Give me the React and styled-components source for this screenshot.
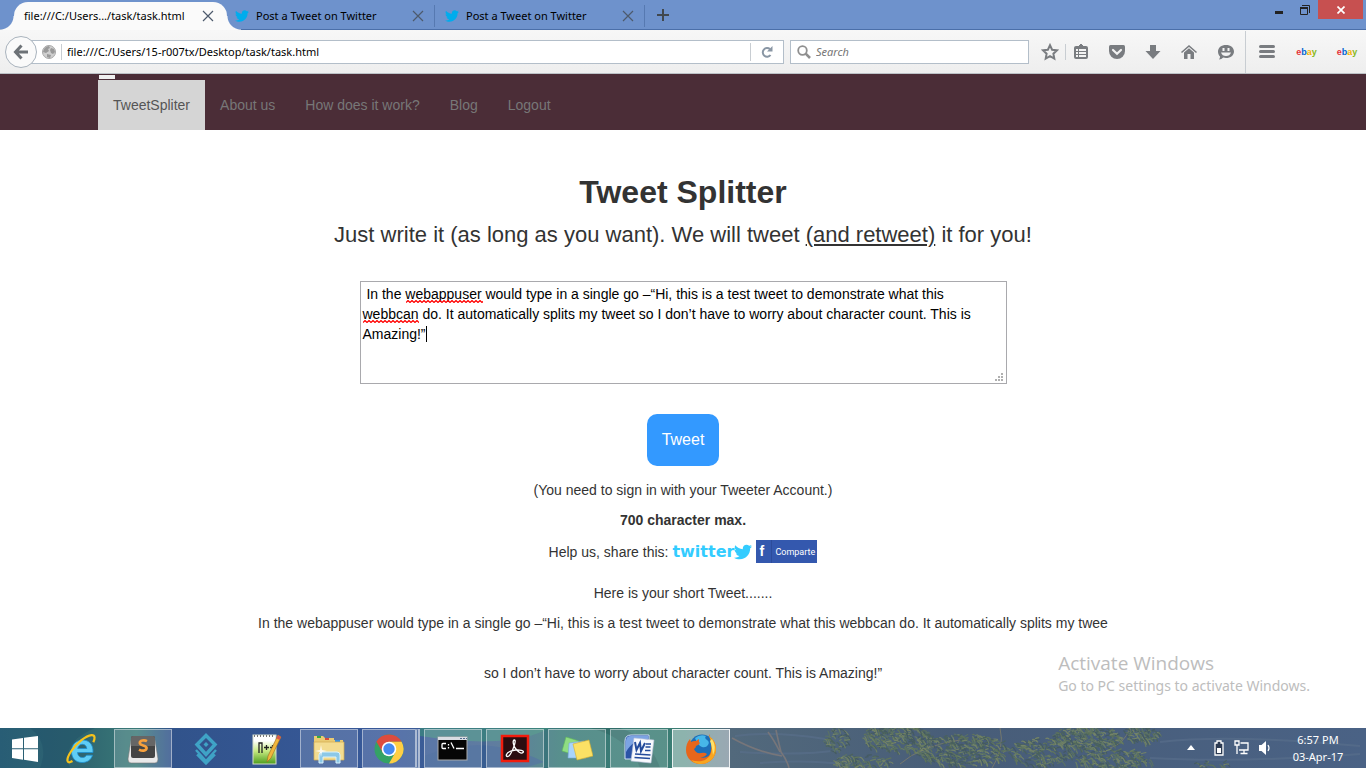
import React from "react";
import styled, { createGlobalStyle, css } from "styled-components";
import { FaTwitter } from "react-icons/fa";

const ui = '"Noto Sans", "Open Sans", sans-serif';
const page = '"Liberation Sans", Arial, sans-serif';

const Global = createGlobalStyle`
  *, *::before, *::after { box-sizing: border-box; }
  body { margin: 0; background: #fff; font-family: ${page}; }
  button, input, textarea { font: inherit; color: inherit; margin: 0; }
  button { padding: 0; border: 0; background: none; }
  svg { display: block; }
`;

const Screen = styled.div`
  min-height: 100vh;
  display: flex;
  flex-direction: column;
`;

/* ---------- browser chrome ---------- */

const TabStrip = styled.div`
  display: flex;
  height: 30px;
  padding-left: 14px;
  padding-right: 3px;
  background: #6e92cc;
  border-bottom: 1px solid #4b6fa9;
  font: 11px/16px ${ui};
  color: #000;
`;

const Tab = styled.div`
  position: relative;
  display: flex;
  align-items: center;
  width: 210px;
  padding: 2px 11px 0 8px;
  ${(p) =>
    p.$active
      ? css`
          width: 213px;
          height: 28px;
          margin-top: 2px;
          padding: 0 11px 0 10px;
          background: #fafafa;
          border-radius: 14px 14px 0 0;
          &::before,
          &::after {
            content: "";
            position: absolute;
            bottom: 0;
            width: 14px;
            height: 14px;
          }
          &::before {
            left: -14px;
            background: radial-gradient(circle at 0 0, transparent 13px, #fafafa 14px);
          }
          &::after {
            right: -14px;
            background: radial-gradient(circle at 100% 0, transparent 13px, #fafafa 14px);
          }
        `
      : css`
          &::after {
            content: "";
            position: absolute;
            right: 2px;
            top: 5px;
            height: 22px;
            border-right: 1px solid #5679b1;
          }
        `}
`;

const TabTitle = styled.span`
  flex: 1;
  white-space: nowrap;
`;

const TabIcon = styled.span`
  width: 21px;
  color: #00aced;
`;

const IconButton = styled.button`
  display: flex;
  align-items: center;
  justify-content: center;
  width: ${(p) => p.$w || 36}px;
  height: ${(p) => p.$h || 28}px;
  flex: none;
  background: ${(p) => p.$bg || "none"};
`;

const WindowControls = styled.div`
  display: flex;
  align-items: flex-start;
  margin-left: auto;
`;

const Toolbar = styled.div`
  display: flex;
  align-items: center;
  height: 44px;
  padding-left: 5px;
  background: linear-gradient(#f7f7f7, #eeeeee);
  border-bottom: 1px solid #bcc1c6;
  font: 11px/16px ${ui};
`;

const BackButton = styled.button`
  position: relative;
  z-index: 1;
  display: flex;
  align-items: center;
  justify-content: center;
  width: 32px;
  height: 32px;
  border: 1px solid #a9b3bd;
  border-radius: 50%;
  background: #fafafa;
`;

const Field = styled.label`
  display: flex;
  align-items: center;
  height: 24px;
  background: #fff;
  border: 1px solid #b3bec9;
`;

const UrlField = styled(Field)`
  flex: 1;
  margin-left: -6px;
  padding-left: 10px;
`;

const SearchField = styled(Field)`
  flex: 0 1 239px;
  margin-left: 6px;
  padding-left: 6px;
  gap: 5px;
`;

const FieldInput = styled.input`
  flex: 1;
  min-width: 0;
  height: 20px;
  padding: 0;
  border: 0;
  outline: 0;
  background: none;
  &::placeholder {
    color: #757575;
    font-style: italic;
    opacity: 1;
  }
`;

const Rule = styled.span`
  width: 1px;
  height: ${(p) => p.$h || 16}px;
  margin: 0 ${(p) => p.$gap || 0}px;
  flex: none;
  background: #c8cdd2;
`;

const Tools = styled.div`
  display: flex;
  align-items: center;
  padding-left: 6px;
`;

const EbayMark = styled.span`
  font: bold 9px/12px ${page};
  & > :nth-child(1) { color: #e53238; }
  & > :nth-child(2) { color: #0064d2; }
  & > :nth-child(3) { color: #f5af02; }
  & > :nth-child(4) { color: #86b817; }
`;

/* ---------- web page ---------- */

const NavBar = styled.header`
  background: #4b2d37;
`;

const NavInner = styled.div`
  max-width: 1170px;
  margin: 0 auto;
`;

const NavToggle = styled.button`
  display: block;
  width: 16px;
  height: 4px;
  margin-left: 1px;
  background: #efefef;
`;

const NavTop = styled.div`
  padding: 1px 0;
`;

const NavLinks = styled.nav`
  display: flex;
`;

const NavLink = styled.a`
  padding: 15px;
  font-size: 14px;
  line-height: 20px;
  text-decoration: none;
  color: ${(p) => (p.$active ? "#555" : "#777")};
  background: ${(p) => (p.$active ? "#d5d5d5" : "none")};
`;

const Main = styled.main`
  position: relative;
  flex: 1;
  display: flex;
  flex-direction: column;
  align-items: center;
  padding: 44px 16px 16px;
  color: #333;
  font-size: 14px;
  line-height: 20px;
  text-align: center;
`;

const Title = styled.h1`
  margin: 0 0 13px;
  font-size: 32px;
  line-height: 36px;
`;

const Subtitle = styled.p`
  margin: 0 0 34px;
  font-size: 22px;
  line-height: 24px;
`;

const Composer = styled.div`
  position: relative;
  width: 100%;
  max-width: 647px;
  height: 103px;
  margin-bottom: 30px;
`;

const TweetBox = styled.textarea`
  display: block;
  width: 100%;
  height: 100%;
  padding: 2px;
  border: 1px solid #a9a9ad;
  outline: 0;
  resize: none;
  color: #000;
  background: #fff;
`;

const Squiggle = styled.span`
  position: absolute;
  left: ${(p) => p.$x}px;
  top: ${(p) => p.$y}px;
  width: ${(p) => p.$w}px;
  height: 3px;
  overflow: hidden;
`;

const Caret = styled.span`
  position: absolute;
  left: 66px;
  top: 45px;
  width: 1px;
  height: 16px;
  background: #000;
`;

const Grip = styled.span`
  position: absolute;
  right: 4px;
  bottom: 3px;
`;

const TweetButton = styled.button`
  padding: 15px;
  margin-bottom: 14px;
  border-radius: 10px;
  background: #3399ff;
  color: #fff;
  font-size: 16px;
  line-height: 22px;
`;

const Line = styled.p`
  margin: 0 0 ${(p) => p.$after || 10}px;
  font-weight: ${(p) => (p.$bold ? "bold" : "normal")};
`;

const ShareRow = styled.div`
  display: flex;
  align-items: center;
  gap: 4px;
  margin-bottom: 20px;
`;

const TwitterLink = styled.a`
  display: flex;
  align-items: center;
  color: #33ccff;
  font: bold 16px/22px "DejaVu Sans", sans-serif;
  text-decoration: none;
`;

const FacebookLink = styled.a`
  display: flex;
  align-items: center;
  width: 61px;
  height: 23px;
  background: #3458ae;
  color: #fff;
  font: 9px/14px Roboto, sans-serif;
  text-decoration: none;
`;

const FacebookF = styled.span`
  flex: none;
  width: 16px;
  margin-right: 3px;
  padding-left: 3px;
  border-right: 1px solid #2c4c9b;
  font: bold 14px/23px ${page};
  text-align: left;
`;

const Watermark = styled.aside`
  position: absolute;
  right: 56px;
  bottom: 32px;
  color: #bdbdbd;
  font: 14px/20px ${ui};
  text-align: left;
`;

const WatermarkTitle = styled.div`
  font: 19px/26px "Open Sans", "Noto Sans", sans-serif;
`;

/* ---------- taskbar ---------- */

const Taskbar = styled.footer`
  position: relative;
  display: flex;
  height: 40px;
  overflow: hidden;
  background: #4b607d;
  color: #fff;
`;

const Wallpaper = styled.svg`
  position: absolute;
  inset: 0;
  width: 100%;
  height: 100%;
`;

const Apps = styled.div`
  position: relative;
  display: flex;
  gap: 4px;
  padding-top: 1px;
`;

const AppButton = styled.button`
  display: flex;
  align-items: center;
  justify-content: center;
  width: 58px;
  height: 39px;
  border: 1px solid ${(p) => (p.$open ? "rgba(255,255,255,.45)" : "transparent")};
  background: ${(p) => (p.$open ? "rgba(255,255,255,.16)" : "none")};
  ${(p) =>
    p.$current &&
    css`
      border-color: rgba(255, 255, 255, 0.8);
      background: rgba(255, 255, 255, 0.42);
    `}
  ${(p) =>
    p.$stacked &&
    css`
      border-right: 5px double rgba(255, 255, 255, 0.5);
    `}
  ${(p) => p.$start && css`width: 48px;`}
`;

const Tray = styled.div`
  position: relative;
  display: flex;
  align-items: center;
  margin-left: auto;
  padding-right: 6px;
`;

const TrayIcons = styled.div`
  display: flex;
  margin-left: 4px;
`;

const Clock = styled.time`
  width: 84px;
  text-align: center;
  font: 11px/17px ${ui};
`;

/* ---------- drawings ---------- */

const Close = ({ c = "#4d5a6c" }) => (
  <svg width="12" height="12" viewBox="0 0 12 12" stroke={c} strokeWidth="1.2">
    <path d="M1 1l10 10M11 1L1 11" />
  </svg>
);

const tool = {
  star: <path d="M9 2.200l2.100 4.500 4.900.6-3.600 3.400.9 4.900L9 13.200l-4.300 2.400.9-4.900L2 7.300l4.900-.6z" fill="none" stroke="#797c80" strokeWidth="2" />,
  list: (
    <g>
      <path d="M6 4l3-3 3 3" fill="#797c80" stroke="#797c80" />
      <rect x="2" y="3" width="14" height="13" rx="2" fill="#797c80" />
      <path d="M4 6h2v2H4zM7 6h7v2H7zM4 9h2v2H4zM7 9h7v2H7zM4 12h2v2H4zM7 12h7v2H7z" fill="#f3f3f3" />
    </g>
  ),
  pocket: (
    <g>
      <path d="M1 3.500Q1 2 2.500 2h13Q17 2 17 3.500V8a8 8 0 0 1-16 0z" fill="#797c80" />
      <path d="M5 7l4 3.800L13 7" fill="none" stroke="#f3f3f3" strokeWidth="2.200" strokeLinecap="round" />
    </g>
  ),
  down: <path d="M6 2h6v6h4.500L9 16 1.500 8H6z" fill="#797c80" />,
  home: (
    <g>
      <path d="M1.500 9.500L9 3l7.500 6.500" fill="none" stroke="#797c80" strokeWidth="1.600" />
      <path d="M4 9.500L9 5.200l5 4.300V16h-3.500v-5h-3v5H4z" fill="#797c80" />
    </g>
  ),
  chat: (
    <g>
      <path d="M9 2c4.700 0 8 2.700 8 6.500S13.700 15 9 15c-1 0-2-.1-2.800-.4Q4.500 16.500 2 16.500q1.200-1.500 1-3C1.700 12.300 1 10.500 1 8.500 1 4.700 4.300 2 9 2z" fill="#797c80" />
      <rect x="5.500" y="5" width="2" height="3" fill="#f3f3f3" />
      <rect x="10.500" y="5" width="2" height="3" fill="#f3f3f3" />
      <path d="M4 9.500h10q-1.200 3.500-5 3.500T4 9.500z" fill="#f3f3f3" />
    </g>
  ),
  menu: <path d="M2.500 3.500h13M2.500 8.500h13M2.500 13.500h13" stroke="#797c80" strokeWidth="3" strokeLinecap="round" />,
};

const ToolIcon = ({ name }) => (
  <svg width="18" height="18" viewBox="0 0 18 18">{tool[name]}</svg>
);

const Ebay = () => (
  <EbayMark><span>e</span><span>b</span><span>a</span><span>y</span></EbayMark>
);

const wave = (w) => {
  let d = "M0 2.500";
  for (let x = 2; x <= w + 2; x += 2) d += `L${x} ${(x / 2) % 2 ? 0.5 : 2.5}`;
  return d;
};

const Misspelling = ({ x, y, w }) => (
  <Squiggle $x={x} $y={y} $w={w}>
    <svg width={w} height="3"><path d={wave(w)} fill="none" stroke="#f00" strokeWidth="1.200" /></svg>
  </Squiggle>
);

const AppIcon = ({ children }) => (
  <svg width="32" height="32" viewBox="0 0 32 32">{children}</svg>
);

const apps = [
  {
    name: "Start",
    start: true,
    art: (
      <path d="M4 6.500l11-1.500V15.200H4zM16 4.800L30 3v12.200H16zM4 16.200h11v10.500L4 25zM16 16.200h14V29l-14-2.200z" fill="#fff" />
    ),
  },
  {
    name: "Internet Explorer",
    art: (
      <g fill="none">
        <path fillRule="evenodd" d="M28 19.500H12.500c.3 3.300 2.300 5 4.800 5 2 0 3.300-.8 4.200-2.300h6c-1.500 4.800-5.300 7.300-10.400 7.300C10.500 29.500 6.500 25 6.500 18.500S11 7 17.500 7 28.500 11.500 28 19.500zM12.700 15.500h9.100c-.3-2.600-1.900-4.200-4.400-4.200s-4.200 1.600-4.700 4.200z" fill="#5fcdf5" stroke="#1d8fd0" strokeWidth=".8" />
        <path d="M7.500 28C1 32 1 26 6 18.500 12 9.500 21 2.800 26.500 2.200c4-.2 3.500 3.600 1.800 7" stroke="#f6c21c" strokeWidth="2.200" />
      </g>
    ),
  },
  {
    name: "Sublime Text",
    open: true,
    art: (
      <g>
        <path d="M4 7q0-2 2-2h20q2 0 2 2l3 19q0 4-3 4H4q-3 0-3-4z" fill="#e9e9e9" stroke="#777" strokeWidth=".6" />
        <rect x="4" y="3" width="24" height="22" rx="2" fill="#444" />
        <path d="M4 5q0-2 2-2h20q2 0 2 2v8H4z" fill="#666" />
        <path d="M20 8.200c-2.500-1.400-7.500-1-7.200 2s7.200 1.500 6.800 5c-.4 3-4.600 3-7.600 1.400" fill="none" stroke="#f9a13c" strokeWidth="2.600" />
      </g>
    ),
  },
  {
    name: "Cube",
    art: (
      <g fill="none" stroke="#3fa3c6" strokeWidth="3.500">
        <path d="M17 2.500l9 9-9 10-9-10z" />
        <path d="M7 17l10 11 10-11M8 21.500l9 9 9-9" strokeWidth="2.400" />
        <path d="M17 9l2.500 2.500L17 14l-2.500-2.500z" fill="#3fa3c6" stroke="none" />
      </g>
    ),
  },
  {
    name: "Notepad++",
    art: (
      <g>
        <defs>
          <linearGradient id="npp" x2="0" y2="1">
            <stop offset=".2" stopColor="#fff" />
            <stop offset=".55" stopColor="#c7ea81" />
            <stop offset="1" stopColor="#4c9c1c" />
          </linearGradient>
        </defs>
        <rect x="2" y="2" width="23" height="29" fill="url(#npp)" stroke="#d5dccb" />
        <path d="M3 3h21" stroke="#777" strokeWidth="2" strokeDasharray="1 2" />
        <path d="M8 20V10h3v10M13 14.500h5M15.500 12v5M19 14.500h5M21.500 12v5" fill="none" stroke="#222" strokeWidth="1.300" />
        <path d="M27 2l3 2-10 21-4 4 1-6z" fill="#f0b73c" stroke="#9b6a21" strokeWidth=".6" />
        <path d="M27 2l3 2-1.500 3-3.200-1.800z" fill="#d85a4c" />
      </g>
    ),
  },
  {
    name: "File Explorer",
    open: true,
    art: (
      <g>
        <path d="M1 3h9l2 2h9v5H1zM9 5h10l1 2h10v6H9z" fill="#eacb73" />
        <path d="M4 3h4v2H4z" fill="#39a83e" />
        <path d="M12 5h4v2h-4z" fill="#d54b3a" />
        <path d="M22 7h5v2h-5z" fill="#3a90dc" />
        <path d="M1 9h30v18H1z" fill="#f3dc90" stroke="#d1a94e" strokeWidth=".7" />
        <path d="M6 30v-8q0-3 3-3h15q3 0 3 3v8h-4v-6H10v6z" fill="#8cc8e7" stroke="#d9f2fc" strokeWidth="1" />
        <path d="M8 12l1 5 5 1-5 1-1 5-1-5-5-1 5-1z" fill="#fff" opacity=".8" />
      </g>
    ),
  },
  {
    name: "Chrome",
    open: true,
    stacked: true,
    art: (
      <g>
        <circle cx="16" cy="16" r="14.500" fill="#34a265" />
        <path d="M16 16L3.440 8.750A14.500 14.500 0 0 1 28.560 8.750H16z" fill="#dd4b3e" />
        <path d="M28.560 8.750A14.500 14.500 0 0 1 16 30.500L22.300 19.600 16 8.750z" fill="#ffce44" />
        <path d="M3.440 8.750L9.700 19.600 16 16V8.750z" fill="#dd4b3e" />
        <circle cx="16" cy="16" r="7.300" fill="#fff" />
        <circle cx="16" cy="16" r="5.700" fill="#4589f0" />
      </g>
    ),
  },
  {
    name: "Command Prompt",
    open: true,
    art: (
      <g>
        <rect x="1" y="4" width="29" height="23" fill="#050505" stroke="#aaa" />
        <rect x="1" y="4" width="29" height="3" fill="#d8dce2" />
        <path d="M23 5.500h2m1 0h2m1 0h1" stroke="#526b90" />
        <path d="M9 10.500H6q-1 0-1 1v3q0 1 1 1h3M11.500 11v1.500M11.500 14v1.500M14 9.500l3 6M19 15.500h8" fill="none" stroke="#fff" strokeWidth="1.300" />
      </g>
    ),
  },
  {
    name: "Adobe Reader",
    open: true,
    art: (
      <g>
        <rect x="3" y="3" width="26" height="25" fill="#2b0d10" stroke="#f21c0d" strokeWidth="2.500" />
        <path d="M15.500 7c-2.500 0-1 6 1 8.500s5.500 6 7.500 4-4-3-7.500-2.500-8 2-9 4.500 2 3 4-.5c3-5 6-14 4-14z" fill="none" stroke="#fff" strokeWidth="1.300" />
      </g>
    ),
  },
  {
    name: "Sticky Notes",
    open: true,
    art: (
      <g strokeWidth=".6">
        <path d="M5 4l13 4-4 14-13-4z" fill="#8fdc83" stroke="#60b957" />
        <path d="M8 10l15-2 2 17H7z" fill="#a9d4fb" stroke="#75a8d9" />
        <path d="M12 11l16-4 4 16-16 4z" fill="#fbe165" stroke="#d4ad2d" />
      </g>
    ),
  },
  {
    name: "Word",
    open: true,
    art: (
      <g>
        <path d="M2 8q0-6 6-6h18v24H2z" fill="#2b54a6" stroke="#cfdff7" />
        <path d="M3 8q0-5 5-5h17v3Q10 6 3 19z" fill="#7ca4e3" />
        <path d="M11 5l20 2-3 23-20-2z" fill="#f7f9fd" stroke="#b8c3da" strokeWidth=".6" />
        <path d="M12 9l1.500 8L17 10l1 8 4-8" fill="none" stroke="#234b9b" strokeWidth="2" />
        <path d="M23 11h5M22.500 14h5M22 17.500h5.500M12 21l15.500 1M11.500 24.500l15.500 1" stroke="#234b9b" strokeWidth="1.600" />
      </g>
    ),
  },
  {
    name: "Firefox",
    open: true,
    current: true,
    art: (
      <g>
        <circle cx="17" cy="14" r="12.500" fill="#1d6fb8" />
        <path d="M10 5q5-4 11-2-2 2 1 4t1 5-6 2-7-9z" fill="#47b7e8" />
        <path d="M24 3q7 5 7 13c0 8-6 15-15 15C7 31 1 25 1 17c0-4 1-8 4-11l1 3q2-1.500 5-1l3-2q-.5 3 1 4-1 2-4 3 0 2-2 3 2 5 7 4 4-1 6 1-3 4-8 3 10 3 12-6t-2-17z" fill="#e8661b" />
        <path d="M24 3q7 5 7 13c0 8-6 15-15 15-4 0-7-1-10-4 9 3 17 1 20-7q2-8-2-17z" fill="#f8a51f" />
        <path d="M27 6q5 8 1 16-1-9-3-14z" fill="#ffe26a" />
      </g>
    ),
  },
];

/* Repeatable pseudo-random leaf strokes for the desktop seen through the taskbar. */
const leaves = (() => {
  let seed = 7;
  const rnd = () => {
    seed = (seed * 16807) % 2147483647;
    return seed / 2147483647;
  };
  const clumps = [
    [835, 12, 12, 12, 50], [895, 10, 34, 14, 260], [960, 22, 46, 16, 380],
    [860, 35, 30, 8, 90], [1040, 24, 32, 14, 170], [1085, 10, 34, 12, 280],
    [1110, 32, 40, 10, 180], [1140, 6, 18, 8, 90], [1210, 36, 16, 4, 18],
  ];
  const shades = ["#71855f", "#5d7562", "#7f8d63", "#4b6357", "#657a55", "#445a5c"];
  return clumps.flatMap(([cx, cy, rx, ry, n]) =>
    Array.from({ length: n }, () => {
      const angle = rnd() * Math.PI * 2;
      const reach = Math.sqrt(rnd());
      const x = cx + Math.cos(angle) * reach * rx;
      const y = cy + Math.sin(angle) * reach * ry;
      const dx = 2 + rnd() * 4;
      const dy = (rnd() - 0.3) * 9;
      return {
        d: `M${x.toFixed(1)} ${y.toFixed(1)}q${(dx / 2).toFixed(1)} -1 ${dx.toFixed(1)} ${dy.toFixed(1)}`,
        c: shades[Math.floor(rnd() * shades.length)],
      };
    })
  );
})();

const Desktop = () => (
  <Wallpaper viewBox="0 0 1366 40" preserveAspectRatio="none" aria-hidden="true">
    <defs>
      <linearGradient id="sky">
        <stop offset="0" stopColor="#285d75" />
        <stop offset=".06" stopColor="#2f6570" />
        <stop offset=".1" stopColor="#3a7a78" />
        <stop offset=".125" stopColor="#31538b" />
        <stop offset=".29" stopColor="#38599a" />
        <stop offset=".36" stopColor="#42648e" />
        <stop offset=".41" stopColor="#397a78" />
        <stop offset=".5" stopColor="#3b7d73" />
        <stop offset=".535" stopColor="#52697c" />
        <stop offset=".7" stopColor="#485d78" />
        <stop offset="1" stopColor="#4a6285" />
      </linearGradient>
    </defs>
    <rect width="1366" height="40" fill="url(#sky)" />
    <path d="M30 0q20 15 10 40h30Q60 15 95 0z" fill="#1f4d66" opacity=".4" />
    <path d="M420 0h130q-40 22-130 8z" fill="#3c8a7c" opacity=".7" />
    <path d="M424 28q60-24 120 6l-20 6H424z" fill="#345b92" opacity=".7" />
    <path d="M590 0q40 10 50 40h20Q650 10 620 0z" fill="#2c6461" opacity=".6" />
    <path d="M735 8q40-5 90 3M740 24q60 4 100-2M1160 14q70-8 200 4M1150 30q90 5 210-4M760 35q50-4 90 2" fill="none" stroke="#5a6f8c" strokeWidth="2" opacity=".6" />
    <path d="M732 10q25 14 50 18M776 2q2 10 5 22 6 8 8 16M768 4q6 8 12 20" fill="none" stroke="#77767a" strokeWidth="1.600" />
    <path d="M1000 0q5 20-8 40M900 36q20-18 60-24M1110 20q14-4 20-20" fill="none" stroke="#74776d" />
    <g fill="none" strokeWidth="1.200" opacity=".8">
      {leaves.map((l, i) => <path key={i} d={l.d} stroke={l.c} />)}
    </g>
  </Wallpaper>
);

export default function App() {
  return (
    <Screen>
      <Global />
      <TabStrip>
        <Tab $active>
          <TabTitle>file:///C:/Users.../task/task.html</TabTitle>
          <IconButton $w={16} $h={16} aria-label="Close tab"><Close /></IconButton>
        </Tab>
        {[1, 2].map((n) => (
          <Tab key={n}>
            <TabIcon><FaTwitter size={14} /></TabIcon>
            <TabTitle>Post a Tweet on Twitter</TabTitle>
            <IconButton $w={16} $h={16} aria-label="Close tab"><Close /></IconButton>
          </Tab>
        ))}
        <IconButton $w={32} $h={30} aria-label="New tab">
          <svg width="12" height="12"><path d="M6 0v12M0 6h12" stroke="#41484f" strokeWidth="2" /></svg>
        </IconButton>
        <WindowControls>
          <IconButton $w={26} $h={20} aria-label="Minimize">
            <svg width="8" height="8"><path d="M0 6.500h8" stroke="#222" strokeWidth="3" /></svg>
          </IconButton>
          <IconButton $w={26} $h={19} aria-label="Restore">
            <svg width="10" height="10" fill="none" stroke="#222">
              <path d="M0 3h8" strokeWidth="2" />
              <path d="M.5 2.500h7v7h-7zM2 .5h7.500V8" />
            </svg>
          </IconButton>
          <IconButton $w={45} $h={19} $bg="#c75050" aria-label="Close window">
            <svg width="8" height="8"><path d="M.5 .5l7 7M7.500 .5l-7 7" stroke="#fff" strokeWidth="1.700" /></svg>
          </IconButton>
        </WindowControls>
      </TabStrip>
      <Toolbar>
        <BackButton aria-label="Back">
          <svg width="16" height="16" viewBox="0 0 16 16" fill="none" stroke="#6d7277" strokeWidth="3">
            <path d="M15 8H3M8.500 1.500L2.500 8l6 6.500" />
          </svg>
        </BackButton>
        <UrlField>
          <svg width="14" height="14" viewBox="0 0 14 14">
            <circle cx="7" cy="7" r="6.500" fill="#cfcfcf" stroke="#a8a8a8" />
            <path d="M2 4q2-3 5-3l1 2-2 1 1 2-3 2-3-1zM9 3l3 1 1 3-2 2-2-1-1-3zM5 9l4 1-1 3-3-1z" fill="#999" />
          </svg>
          <Rule $gap={5} />
          <FieldInput aria-label="Address" defaultValue="file:///C:/Users/15-r007tx/Desktop/task/task.html" />
          <Rule $h={18} />
          <IconButton $w={32} $h={22} type="button" aria-label="Reload">
            <svg width="12" height="12" viewBox="0 0 12 12">
              <path d="M9.500 9A4.300 4.300 0 1 1 9 3.200" fill="none" stroke="#8996a4" strokeWidth="2" />
              <path d="M11.500 0v5.500H6z" fill="#8996a4" />
            </svg>
          </IconButton>
        </UrlField>
        <SearchField>
          <svg width="14" height="14" viewBox="0 0 14 14" fill="none" stroke="#8f8f8f">
            <circle cx="5.500" cy="5.500" r="4.300" strokeWidth="1.800" />
            <path d="M8.700 8.700L13 13" strokeWidth="2.600" />
          </svg>
          <FieldInput aria-label="Search" placeholder="Search" />
        </SearchField>
        <Tools>
          <IconButton $w={30} aria-label="Bookmark"><ToolIcon name="star" /></IconButton>
          <Rule />
          <IconButton $w={30} aria-label="Bookmarks list"><ToolIcon name="list" /></IconButton>
          <IconButton $w={42} aria-label="Pocket"><ToolIcon name="pocket" /></IconButton>
          <IconButton $w={30} aria-label="Downloads"><ToolIcon name="down" /></IconButton>
          <IconButton $w={42} aria-label="Home"><ToolIcon name="home" /></IconButton>
          <IconButton $w={32} aria-label="Chat"><ToolIcon name="chat" /></IconButton>
          <Rule $h={42} $gap={3} />
          <IconButton $w={36} aria-label="Menu"><ToolIcon name="menu" /></IconButton>
          <IconButton $w={43} aria-label="eBay"><Ebay /></IconButton>
          <IconButton $w={38} aria-label="eBay deals"><Ebay /></IconButton>
        </Tools>
      </Toolbar>

      <NavBar>
        <NavInner>
          <NavTop><NavToggle aria-label="Toggle navigation" /></NavTop>
          <NavLinks>
            <NavLink href="#" $active>TweetSpliter</NavLink>
            <NavLink href="#about">About us</NavLink>
            <NavLink href="#how">How does it work?</NavLink>
            <NavLink href="#blog">Blog</NavLink>
            <NavLink href="#logout">Logout</NavLink>
          </NavLinks>
        </NavInner>
      </NavBar>

      <Main>
        <Title>Tweet Splitter</Title>
        <Subtitle>Just write it (as long as you want). We will tweet <u>(and retweet)</u> it for you!</Subtitle>
        <Composer>
          <TweetBox
            aria-label="Your tweet"
            spellCheck={false}
            defaultValue={" In the webappuser would type in a single go –“Hi, this is a test tweet to demonstrate what this webbcan do. It automatically splits my tweet so I don’t have to worry about character count. This is Amazing!”"}
          />
          <Misspelling x={46} y={19} w={77} />
          <Misspelling x={3} y={39} w={56} />
          <Caret />
          <Grip>
            <svg width="8" height="8" fill="#b0b0b0">
              <path d="M6 0h2v2H6zM3 3h2v2H3zM6 3h2v2H6zM0 6h2v2H0zM3 6h2v2H3zM6 6h2v2H6z" />
            </svg>
          </Grip>
        </Composer>
        <TweetButton>Tweet</TweetButton>
        <Line>(You need to sign in with your Tweeter Account.)</Line>
        <Line $bold>700 character max.</Line>
        <ShareRow>
          <span>Help us, share this:</span>
          <TwitterLink href="#twitter">twitter<FaTwitter size={18} /></TwitterLink>
          <FacebookLink href="#facebook"><FacebookF>f</FacebookF>Comparte</FacebookLink>
        </ShareRow>
        <Line>Here is your short Tweet.......</Line>
        <Line $after={30}>In the webappuser would type in a single go –“Hi, this is a test tweet to demonstrate what this webbcan do. It automatically splits my twee</Line>
        <Line>so I don’t have to worry about character count. This is Amazing!”</Line>
        <Watermark>
          <WatermarkTitle>Activate Windows</WatermarkTitle>
          Go to PC settings to activate Windows.
        </Watermark>
      </Main>

      <Taskbar>
        <Desktop />
        <Apps>
          {apps.map((a) => (
            <AppButton key={a.name} aria-label={a.name} $open={a.open} $current={a.current} $stacked={a.stacked} $start={a.start}>
              <AppIcon>{a.art}</AppIcon>
            </AppButton>
          ))}
        </Apps>
        <Tray>
          <IconButton $w={24} $h={24} aria-label="Show hidden icons">
            <svg width="8" height="6"><path d="M4 0l4 5H0z" fill="#fff" /></svg>
          </IconButton>
          <TrayIcons>
            <IconButton $w={23} $h={24} aria-label="Battery">
              <svg width="10" height="16" viewBox="0 0 10 16">
                <path d="M3 1h4v2h2v12H1V3h2z" fill="#2b3a52" stroke="#fff" strokeWidth="1.300" />
                <path d="M3 8h4v5H3z" fill="#fff" />
              </svg>
            </IconButton>
            <IconButton $w={23} $h={24} aria-label="Network">
              <svg width="16" height="16" viewBox="0 0 16 16" fill="none" stroke="#fff" strokeWidth="1.300">
                <path d="M1 1h4v4H1zM3 5v9M6.500 3H14v7H5M10 10v3M6.500 13.500h7" />
              </svg>
            </IconButton>
            <IconButton $w={23} $h={24} aria-label="Volume">
              <svg width="14" height="14" viewBox="0 0 14 14">
                <path d="M1 4h2.500L8 0v14L3.500 10H1z" fill="#fff" />
                <path d="M10 4q2 3 0 6" fill="none" stroke="#fff" strokeWidth="1.200" />
              </svg>
            </IconButton>
          </TrayIcons>
          <Clock>6:57 PM<br />03-Apr-17</Clock>
        </Tray>
      </Taskbar>
    </Screen>
  );
}
